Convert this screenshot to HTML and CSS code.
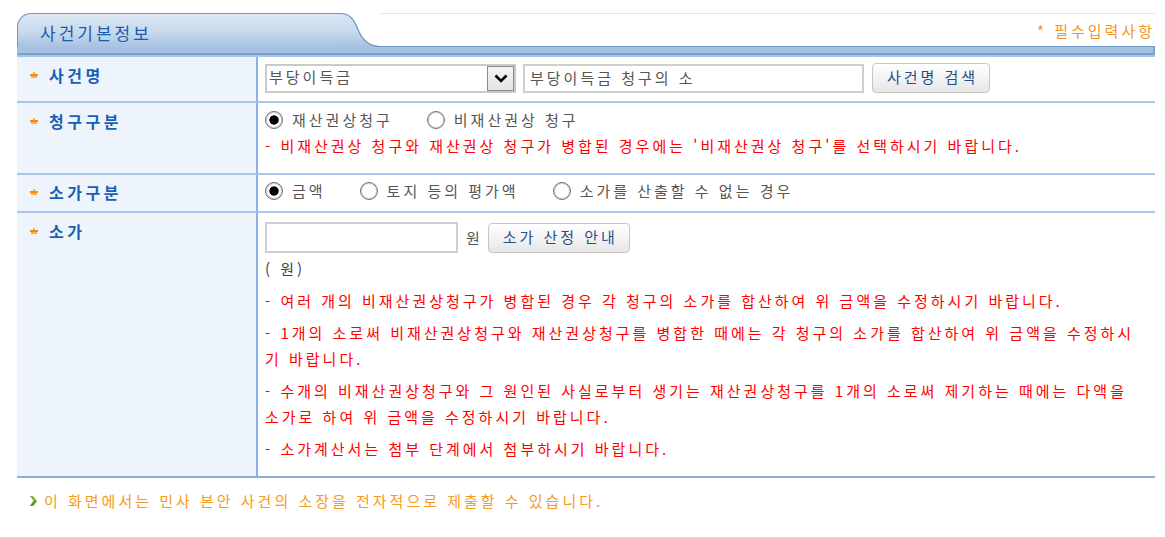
FILE: index.html
```html
<!DOCTYPE html>
<html lang="ko">
    <head>
        <meta charset="UTF-8">
        <meta name="viewport" content="width=device-width, initial-scale=1.0">
        <title>사건기본정보</title>
        <link rel="stylesheet" href="styles.css">
    </head>
    <body>
        <div class="wrap">
            <div class="sec-head">
                <div class="tab">사건기본정보</div>
                <svg class="tab-curve" viewBox="0 0 43 34" aria-hidden="true">
                    <defs>
                        <linearGradient id="tabGrad" x1="0" y1="0" x2="0" y2="1">
                            <stop offset="0" stop-color="#dde8f4"/>
                            <stop offset="0.55" stop-color="#c7d9ed"/>
                            <stop offset="1" stop-color="#a6c2e2"/>
                        </linearGradient>
                    </defs>
                    <path d="M0 0 H3 C13 0 17 6 21 16 C25 26 31 33 43 33 V34 H0 Z" fill="url(#tabGrad)"/>
                    <path d="M0 0.5 H3 C13 0.5 17 6.5 21 16.5 C25 26.5 31 33.5 43 33.5" fill="none" stroke="#6f97c6" stroke-width="1.2"/>
                </svg>
                <div class="head-rest">
                    <span class="req-note">* 필수입력사항</span>
                </div>
            </div>
            <div class="sec-bar"></div>
            <table class="form-tbl">
                <colgroup>
                    <col class="c-label">
                    <col>
                </colgroup>
                <tr>
                    <th><div class="lbl"><svg class="lbl-ico" viewBox="0 0 8 6"><rect x="3" y="0" width="2" height="2" fill="#fbb24a"/><rect x="0" y="2" width="8" height="2" fill="#f28c0c"/><rect x="1" y="4" width="6" height="2" fill="#f9b04a"/></svg>사건명</div></th>
                    <td>
                        <div class="case-name">
                            <div class="sel">
                                <select>
                                    <option>부당이득금</option>
                                </select>
                                <span class="sel-btn">
                                    <svg viewBox="0 0 14 9" width="14" height="9"><path d="M1.5 1.5 L7 7 L12.5 1.5" fill="none" stroke="#000" stroke-width="2.6"/></svg>
                                </span>
                            </div>
                            <input type="text" class="txt" value="부당이득금 청구의 소">
                            <button class="btn btn-search">사건명 검색</button>
                        </div>
                    </td>
                </tr>
                <tr>
                    <th><div class="lbl"><svg class="lbl-ico" viewBox="0 0 8 6"><rect x="3" y="0" width="2" height="2" fill="#fbb24a"/><rect x="0" y="2" width="8" height="2" fill="#f28c0c"/><rect x="1" y="4" width="6" height="2" fill="#f9b04a"/></svg>청구구분</div></th>
                    <td>
                        <div class="radios">
                            <label class="rd"><input type="radio" name="claim" checked>재산권상청구</label>
                            <label class="rd"><input type="radio" name="claim">비재산권상 청구</label>
                        </div>
                        <p class="warn">- 비재산권상 청구와 재산권상 청구가 병합된 경우에는 '비재산권상 청구'를 선택하시기 바랍니다.</p>
                    </td>
                </tr>
                <tr>
                    <th class="th-mid"><div class="lbl"><svg class="lbl-ico" viewBox="0 0 8 6"><rect x="3" y="0" width="2" height="2" fill="#fbb24a"/><rect x="0" y="2" width="8" height="2" fill="#f28c0c"/><rect x="1" y="4" width="6" height="2" fill="#f9b04a"/></svg>소가구분</div></th>
                    <td class="cell-mid">
                        <div class="radios">
                            <label class="rd"><input type="radio" name="kind" checked>금액</label>
                            <label class="rd"><input type="radio" name="kind">토지 등의 평가액</label>
                            <label class="rd"><input type="radio" name="kind">소가를 산출할 수 없는 경우</label>
                        </div>
                    </td>
                </tr>
                <tr>
                    <th><div class="lbl"><svg class="lbl-ico" viewBox="0 0 8 6"><rect x="3" y="0" width="2" height="2" fill="#fbb24a"/><rect x="0" y="2" width="8" height="2" fill="#f28c0c"/><rect x="1" y="4" width="6" height="2" fill="#f9b04a"/></svg>소가</div></th>
                    <td class="cell-last">
                        <div class="amount">
                            <input type="text" class="txt amt">
                            <span class="won">원</span>
                            <button class="btn btn-guide">소가 산정 안내</button>
                        </div>
                        <p class="unit">( 원)</p>
                        <div class="notes">
                            <p>- 여러 개의 비재산권상청구가 병합된 경우 각 청구의 소가를 합산하여 위 금액을 수정하시기 바랍니다.</p>
                            <p>- 1개의 소로써 비재산권상청구와 재산권상청구를 병합한 때에는 각 청구의 소가를 합산하여 위 금액을 수정하시기 바랍니다.</p>
                            <p>- 수개의 비재산권상청구와 그 원인된 사실로부터 생기는 재산권상청구를 1개의 소로써 제기하는 때에는 다액을 소가로 하여 위 금액을 수정하시기 바랍니다.</p>
                            <p>- 소가계산서는 첨부 단계에서 첨부하시기 바랍니다.</p>
                        </div>
                    </td>
                </tr>
            </table>
            <p class="guide">
                <svg class="guide-ico" viewBox="0 0 7 10" width="7" height="10"><path d="M0 0 L3 0 L7 5 L3 10 L0 10 L3.5 5 Z" fill="#7ab536"/><path d="M0 10 L3.5 5 L7 5 L3 10 Z" fill="#5a9424"/></svg>
                이 화면에서는 민사 본안 사건의 소장을 전자적으로 제출할 수 있습니다.
            </p>
        </div>
    </body>
</html>
```

FILE: styles.css
```css
body
{
    margin: 0;
    background-color: #fff;
    font-family: "Noto Sans CJK KR", "Noto Sans", sans-serif;
    font-size: 15px;
    color: #555;
}
.wrap
{
    width: 1138px;
    margin: 13px 0 0 17px;
}
.sec-head
{
    display: flex;
    height: 34px;
}
.tab
{
    width: 320px;
    flex: none;
    box-sizing: border-box;
    border-top: 1px solid #6f97c6;
    border-left: 1px solid #6f97c6;
    border-top-left-radius: 14px;
    background: linear-gradient(#dde8f4, #c7d9ed 55%, #a6c2e2);
    padding: 3px 0 0 22px;
    display: flex;
    align-items: center;
    font-size: 17px;
    letter-spacing: 3px;
    color: #1c5ca8;
}
.tab-curve
{
    display: block;
    flex: none;
    width: 43px;
    height: 34px;
}
.head-rest
{
    flex: 1;
    box-sizing: border-box;
    border-top: 1px solid #e6e6e6;
    border-bottom: 1px solid #6f97c6;
    display: flex;
    align-items: center;
    justify-content: flex-end;
}
.req-note
{
    color: #f7941d;
    letter-spacing: 3px;
}
.sec-bar
{
    height: 6px;
    background-color: #a6c2e2;
    border-bottom: 2px solid #7c9fcc;
    border-right: 2px solid #7c9fcc;
}
.form-tbl
{
    width: 1138px;
    table-layout: fixed;
    border-collapse: separate;
    border-spacing: 0;
    border-top: 2px solid #a8c6ec;
}
.form-tbl .c-label
{
    width: 239px;
}
.form-tbl th
{
    background-color: #eef4fb;
    text-align: left;
    vertical-align: top;
    padding: 8px 0 0 13px;
    border-bottom: 2px solid #a8c6ec;
    font-size: 16px;
    font-weight: bold;
    line-height: 20px;
    letter-spacing: 3.5px;
    color: #1a5fb4;
}
.form-tbl th.th-mid
{
    padding-top: 7px;
}
.lbl
{
    display: flex;
    align-items: center;
    gap: 11px;
}
.lbl-ico
{
    width: 8px;
    height: 6px;
    flex: none;
}
.form-tbl td
{
    vertical-align: top;
    padding: 6px 9px 8px 7px;
    border-left: 2px solid #8db3e4;
    border-bottom: 2px solid #a8c6ec;
    line-height: 22px;
    letter-spacing: 3px;
}
.form-tbl td.cell-mid
{
    padding-top: 5px;
    padding-bottom: 9px;
}
.form-tbl td.cell-last
{
    padding-bottom: 14px;
}
.form-tbl tr:last-child th,
.form-tbl tr:last-child td
{
    border-bottom-color: #8eaed9;
}
.case-name
{
    display: flex;
    align-items: center;
    gap: 7px;
}
.sel
{
    display: flex;
    align-items: center;
    width: 251px;
    height: 29px;
    box-sizing: border-box;
    border: 2px solid #cacaca;
    background-color: #fff;
}
.sel select
{
    flex: 1;
    min-width: 0;
    height: 100%;
    appearance: none;
    border: 0;
    outline: none;
    background: transparent;
    padding: 0 0 2px 2px;
    font: inherit;
    letter-spacing: 3px;
    color: #555;
}
.sel-btn
{
    width: 27px;
    height: 25px;
    box-sizing: border-box;
    border: 1px solid #8c8c8c;
    background: linear-gradient(#f4f4f4, #e4e4e4);
    display: flex;
    align-items: center;
    justify-content: center;
}
.txt
{
    width: 341px;
    height: 29px;
    box-sizing: border-box;
    border: 2px solid #cfcfcf;
    padding: 0 5px 2px;
    font: inherit;
    letter-spacing: 3px;
    color: #555;
    outline: none;
}
.btn
{
    height: 30px;
    box-sizing: border-box;
    border: 1px solid #c6c6c6;
    border-radius: 4px;
    background: linear-gradient(#ffffff, #f3f3f3 50%, #e6e6e6);
    padding: 0 0 2px 3px;
    font: inherit;
    letter-spacing: 3px;
    color: #1f4f8c;
    cursor: pointer;
}
.btn-search
{
    width: 118px;
    margin-left: 1px;
}
.btn-guide
{
    width: 142px;
}
.radios
{
    display: flex;
    gap: 34px;
}
.rd
{
    display: inline-flex;
    align-items: center;
    gap: 9px;
}
.rd input
{
    appearance: none;
    width: 18px;
    height: 18px;
    margin: 0;
    border: 1px solid #6f6f6f;
    border-radius: 50%;
    background: radial-gradient(circle, #ffffff 55%, #e4e4e4);
    box-shadow: inset 0 0 0 1px #d4d4d4;
}
.rd input:checked
{
    background: radial-gradient(circle, #000 0 4.3px, #ffffff 5px 55%, #e4e4e4);
}
.warn
{
    margin: 4px 0 8px;
    color: #f00;
}
.amount
{
    display: flex;
    align-items: center;
    margin-top: 3px;
}
.amt
{
    width: 193px;
    height: 31px;
}
.won
{
    margin: 0 5px 0 8px;
}
.unit
{
    margin: 3px 0 0;
    line-height: 26px;
    color: #444;
}
.notes p
{
    margin: 6px 0 0;
    line-height: 26px;
    color: #f00;
}
.guide
{
    display: flex;
    align-items: center;
    gap: 7px;
    margin: 13px 0 0 13px;
    line-height: 20px;
    letter-spacing: 3px;
    color: #f59a1c;
}
.guide-ico
{
    flex: none;
}
```
